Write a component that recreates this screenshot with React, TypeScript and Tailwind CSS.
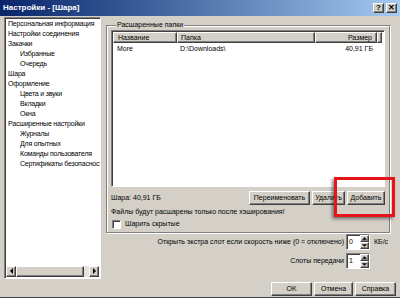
import React from 'react';

const treeItems: { label: string; level: number }[] = [
  { label: 'Персональная информация', level: 0 },
  { label: 'Настройки соединения', level: 0 },
  { label: 'Закачки', level: 0 },
  { label: 'Избранные', level: 1 },
  { label: 'Очередь', level: 1 },
  { label: 'Шара', level: 0 },
  { label: 'Оформление', level: 0 },
  { label: 'Цвета и звуки', level: 1 },
  { label: 'Вкладки', level: 1 },
  { label: 'Окна', level: 1 },
  { label: 'Расширенные настройки', level: 0 },
  { label: 'Журналы', level: 1 },
  { label: 'Для опытных', level: 1 },
  { label: 'Команды пользователя', level: 1 },
  { label: 'Сертификаты безопасности', level: 1 },
];

const raised =
  'bg-[#d4d0c8] border border-t-white border-l-white border-r-[#404040] border-b-[#404040] shadow-[inset_-1px_-1px_0_#808080]';
const sunken =
  'border border-t-[#808080] border-l-[#808080] border-r-white border-b-white shadow-[inset_1px_1px_0_#404040]';

const Btn = ({ children, className = '' }: { children: React.ReactNode; className?: string }) => (
  <div className={`${raised} flex items-center justify-center h-[14px] ${className}`}>{children}</div>
);

const Arrow = ({ dir }: { dir: 'up' | 'down' | 'left' | 'right' }) => {
  const pts = {
    up: '1,4 4,1 7,4',
    down: '1,1 4,4 7,1',
    left: '4,0 1,3 4,6',
    right: '1,0 4,3 1,6',
  }[dir];
  const size = dir === 'up' || dir === 'down' ? { w: 8, h: 5 } : { w: 5, h: 7 };
  return (
    <svg width={size.w} height={size.h} viewBox={`0 0 ${size.w} ${size.h}`}>
      <polygon points={pts} fill="#000" />
    </svg>
  );
};

const Spin = ({ value }: { value: string }) => (
  <div className={`${sunken} bg-white w-[24px] h-[16px] flex`}>
    <div className="flex-1 pl-[2px] pt-[1px] leading-[12px]">{value}</div>
    <div className="w-[9px] flex flex-col">
      <div className={`${raised} flex-1 flex items-center justify-center`}>
        <Arrow dir="up" />
      </div>
      <div className={`${raised} flex-1 flex items-center justify-center`}>
        <Arrow dir="down" />
      </div>
    </div>
  </div>
);

export default function App() {
  return (
    <div
      className="w-[400px] h-[298px] bg-[#d4d0c8] flex flex-col text-[7px] leading-[10px] text-black overflow-hidden border-b border-[#404040]"
      style={{ fontFamily: '"Liberation Sans", Arial, sans-serif' }}
    >
      {/* title bar */}
      <div className="h-[16px] flex items-center bg-gradient-to-r from-[#0a246a] to-[#a6caf0] pl-[3px] pr-[3px]">
        <span className="text-white font-bold text-[8px] flex-1">Настройки - [Шара]</span>
        <div className={`${raised} w-[11px] h-[10px] flex items-center justify-center text-[8px] font-bold leading-none`}>?</div>
        <div className={`${raised} w-[11px] h-[10px] ml-[2px] flex items-center justify-center text-[8px] font-bold leading-none`}>✕</div>
      </div>

      <div className="flex h-[263px] pt-[1px]">
        {/* tree */}
        <div className={`${sunken} bg-white w-[97px] ml-[4px] h-[262px] flex flex-col`}>
          <div className="flex-1 overflow-hidden pt-[1px] pl-[1px] tracking-[-0.2px]">
            {treeItems.map((it) => (
              <div
                key={it.label}
                className={`h-[10px] whitespace-nowrap ${it.level ? 'pl-[14px]' : 'pl-[2px]'}`}
              >
                {it.label}
              </div>
            ))}
          </div>
          <div className="h-[11px] flex bg-[#e6e3de] mx-[1px] mb-[1px]">
            <div className={`${raised} w-[10px] flex items-center justify-center`}>
              <Arrow dir="left" />
            </div>
            <div className={`${raised} w-[68px]`} />
            <div className="flex-1" />
            <div className={`${raised} w-[10px] flex items-center justify-center`}>
              <Arrow dir="right" />
            </div>
          </div>
        </div>

        {/* right */}
        <div className="flex-1 ml-[5px] mr-[10px] flex flex-col">
          <fieldset className="relative h-[213px] border border-[#808080] shadow-[inset_1px_1px_0_#fff,1px_1px_0_#fff] px-[4px] pb-[3px] m-0 mt-[3px]">
            <legend className="ml-[5px] px-[1px] bg-[#d4d0c8] leading-[10px]">Расшаренные папки</legend>
            <div className={`${sunken} bg-white h-[157px] flex flex-col`}>
              <div className="flex h-[11px] mt-[1px] ml-[1px] mr-[2px]">
                <div className={`${raised} w-[64px] pl-[4px] leading-[9px]`}>Название</div>
                <div className={`${raised} w-[138px] pl-[3px] leading-[9px]`}>Папка</div>
                <div className={`${raised} w-[62px] pr-[4px] text-right leading-[9px]`}>Размер</div>
                <div className={`${raised} flex-1`} />
              </div>
              <div className="flex h-[11px] ml-[1px] leading-[11px]">
                <div className="w-[64px] pl-[4px]">More</div>
                <div className="w-[138px] pl-[3px]">D:\Downloads\</div>
                <div className="w-[62px] pr-[4px] text-right">40,91 ГБ</div>
              </div>
            </div>
            <div className="flex items-center mt-[4px]">
              <span className="flex-1">Шара: 40,91 ГБ</span>
              <Btn className="w-[61px] h-[13px]">Переименовать</Btn>
              <Btn className="w-[33px] h-[13px] ml-[2px]">Удалить</Btn>
              <Btn className="w-[38px] h-[13px] ml-[2px]">Добавить</Btn>
            </div>
            <div className="mt-[2px] h-[11px]">Файлы будут расшарены только после хэширования!</div>
            <div className="flex items-center h-[12px]">
              <div className={`${sunken} bg-white w-[9px] h-[9px] ml-[1px]`} />
              <span className="ml-[4px]">Шарить скрытые</span>
            </div>
          </fieldset>

          <div className="grid grid-cols-[1fr_24px_18px] items-center gap-x-[2px] gap-y-[3px] mt-[1px]">
            <span className="text-right">Открыть экстра слот если скорость ниже (0 = отключено)</span>
            <Spin value="0" />
            <span className="pl-[2px]">КБ/с</span>
            <span className="text-right">Слоты передачи</span>
            <Spin value="1" />
            <span />
          </div>

          <div className="absolute left-[334px] top-[177px] w-[61px] h-[40px] border-[3px] border-[#e8141c] shadow-[-2px_2px_3px_rgba(0,0,0,0.45)]" />
        </div>
      </div>

      <div className="flex justify-end pr-[4px] mt-[3px]">
        <Btn className="w-[41px]">OK</Btn>
        <Btn className="w-[39px] ml-[2px]">Отмена</Btn>
        <Btn className="w-[41px] ml-[2px]">Справка</Btn>
      </div>
    </div>
  );
}
